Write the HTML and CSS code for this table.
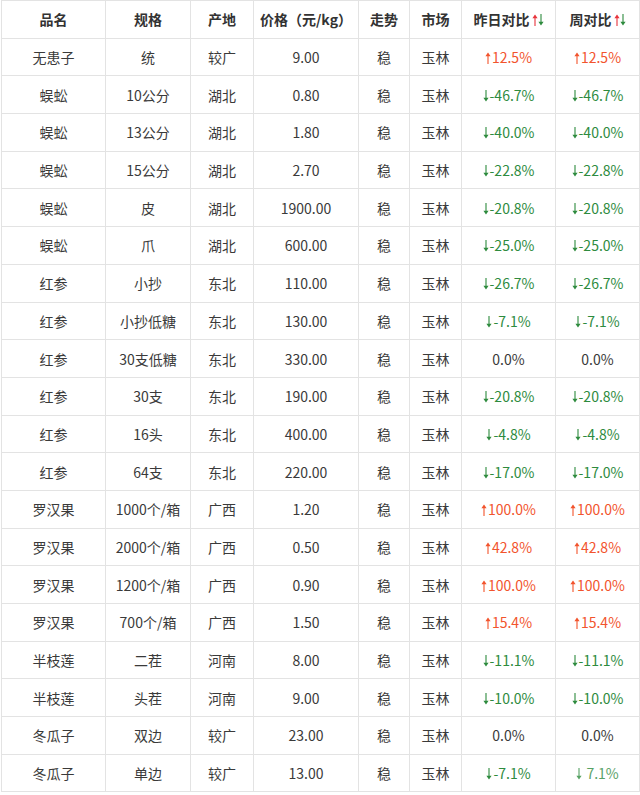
FILE: index.html
```html
<!DOCTYPE html>
<html lang="zh">
<head>
<meta charset="utf-8">
<link rel="stylesheet" href="styles.css">
</head>
<body>
<svg width="0" height="0" class="defs">
  <defs>
    <symbol id="au" viewBox="0 0 6 12"><path d="M3 0.5 L5.6 4.2 H3.55 V12 H2.45 V4.2 H0.4 Z" fill="currentColor"/></symbol>
    <symbol id="ad" viewBox="0 0 6 12"><path d="M3 11.5 L5.6 7.8 H3.55 V0 H2.45 V7.8 H0.4 Z" fill="currentColor"/></symbol>
  </defs>
</svg>
<table class="price-table">
<colgroup>
<col class="c1"><col class="c2"><col class="c3"><col class="c4"><col class="c5"><col class="c6"><col class="c7"><col class="c8">
</colgroup>
<thead>
<tr><th>品名</th><th>规格</th><th>产地</th><th>价格（元/kg）</th><th>走势</th><th>市场</th><th>昨日对比<svg class="arr hu"><use href="#au"/></svg><svg class="arr hd"><use href="#ad"/></svg></th><th>周对比<svg class="arr hu"><use href="#au"/></svg><svg class="arr hd"><use href="#ad"/></svg></th></tr>
</thead>
<tbody>
<tr><td>无患子</td><td>统</td><td>较广</td><td>9.00</td><td>稳</td><td>玉林</td><td class="up"><svg class="arr"><use href="#au"/></svg>12.5%</td><td class="up"><svg class="arr"><use href="#au"/></svg>12.5%</td></tr>
<tr><td>蜈蚣</td><td>10公分</td><td>湖北</td><td>0.80</td><td>稳</td><td>玉林</td><td class="down"><svg class="arr"><use href="#ad"/></svg>-46.7%</td><td class="down"><svg class="arr"><use href="#ad"/></svg>-46.7%</td></tr>
<tr><td>蜈蚣</td><td>13公分</td><td>湖北</td><td>1.80</td><td>稳</td><td>玉林</td><td class="down"><svg class="arr"><use href="#ad"/></svg>-40.0%</td><td class="down"><svg class="arr"><use href="#ad"/></svg>-40.0%</td></tr>
<tr><td>蜈蚣</td><td>15公分</td><td>湖北</td><td>2.70</td><td>稳</td><td>玉林</td><td class="down"><svg class="arr"><use href="#ad"/></svg>-22.8%</td><td class="down"><svg class="arr"><use href="#ad"/></svg>-22.8%</td></tr>
<tr><td>蜈蚣</td><td>皮</td><td>湖北</td><td>1900.00</td><td>稳</td><td>玉林</td><td class="down"><svg class="arr"><use href="#ad"/></svg>-20.8%</td><td class="down"><svg class="arr"><use href="#ad"/></svg>-20.8%</td></tr>
<tr><td>蜈蚣</td><td>爪</td><td>湖北</td><td>600.00</td><td>稳</td><td>玉林</td><td class="down"><svg class="arr"><use href="#ad"/></svg>-25.0%</td><td class="down"><svg class="arr"><use href="#ad"/></svg>-25.0%</td></tr>
<tr><td>红参</td><td>小抄</td><td>东北</td><td>110.00</td><td>稳</td><td>玉林</td><td class="down"><svg class="arr"><use href="#ad"/></svg>-26.7%</td><td class="down"><svg class="arr"><use href="#ad"/></svg>-26.7%</td></tr>
<tr><td>红参</td><td>小抄低糖</td><td>东北</td><td>130.00</td><td>稳</td><td>玉林</td><td class="down"><svg class="arr"><use href="#ad"/></svg>-7.1%</td><td class="down"><svg class="arr"><use href="#ad"/></svg>-7.1%</td></tr>
<tr><td>红参</td><td>30支低糖</td><td>东北</td><td>330.00</td><td>稳</td><td>玉林</td><td>0.0%</td><td>0.0%</td></tr>
<tr><td>红参</td><td>30支</td><td>东北</td><td>190.00</td><td>稳</td><td>玉林</td><td class="down"><svg class="arr"><use href="#ad"/></svg>-20.8%</td><td class="down"><svg class="arr"><use href="#ad"/></svg>-20.8%</td></tr>
<tr><td>红参</td><td>16头</td><td>东北</td><td>400.00</td><td>稳</td><td>玉林</td><td class="down"><svg class="arr"><use href="#ad"/></svg>-4.8%</td><td class="down"><svg class="arr"><use href="#ad"/></svg>-4.8%</td></tr>
<tr><td>红参</td><td>64支</td><td>东北</td><td>220.00</td><td>稳</td><td>玉林</td><td class="down"><svg class="arr"><use href="#ad"/></svg>-17.0%</td><td class="down"><svg class="arr"><use href="#ad"/></svg>-17.0%</td></tr>
<tr><td>罗汉果</td><td>1000个/箱</td><td>广西</td><td>1.20</td><td>稳</td><td>玉林</td><td class="up"><svg class="arr"><use href="#au"/></svg>100.0%</td><td class="up"><svg class="arr"><use href="#au"/></svg>100.0%</td></tr>
<tr><td>罗汉果</td><td>2000个/箱</td><td>广西</td><td>0.50</td><td>稳</td><td>玉林</td><td class="up"><svg class="arr"><use href="#au"/></svg>42.8%</td><td class="up"><svg class="arr"><use href="#au"/></svg>42.8%</td></tr>
<tr><td>罗汉果</td><td>1200个/箱</td><td>广西</td><td>0.90</td><td>稳</td><td>玉林</td><td class="up"><svg class="arr"><use href="#au"/></svg>100.0%</td><td class="up"><svg class="arr"><use href="#au"/></svg>100.0%</td></tr>
<tr><td>罗汉果</td><td>700个/箱</td><td>广西</td><td>1.50</td><td>稳</td><td>玉林</td><td class="up"><svg class="arr"><use href="#au"/></svg>15.4%</td><td class="up"><svg class="arr"><use href="#au"/></svg>15.4%</td></tr>
<tr><td>半枝莲</td><td>二茬</td><td>河南</td><td>8.00</td><td>稳</td><td>玉林</td><td class="down"><svg class="arr"><use href="#ad"/></svg>-11.1%</td><td class="down"><svg class="arr"><use href="#ad"/></svg>-11.1%</td></tr>
<tr><td>半枝莲</td><td>头茬</td><td>河南</td><td>9.00</td><td>稳</td><td>玉林</td><td class="down"><svg class="arr"><use href="#ad"/></svg>-10.0%</td><td class="down"><svg class="arr"><use href="#ad"/></svg>-10.0%</td></tr>
<tr><td>冬瓜子</td><td>双边</td><td>较广</td><td>23.00</td><td>稳</td><td>玉林</td><td>0.0%</td><td>0.0%</td></tr>
<tr><td>冬瓜子</td><td>单边</td><td>较广</td><td>13.00</td><td>稳</td><td>玉林</td><td class="down"><svg class="arr"><use href="#ad"/></svg>-7.1%</td><td class="down faded"><svg class="arr"><use href="#ad"/></svg> 7.1%</td></tr>
</tbody>
</table>
</body>
</html>
```
FILE: styles.css
```css
html, body {
  margin: 0;
  padding: 0;
  background: #fff;
}
body {
  padding: 0 0 0 1px;
  font-family: "Noto Sans CJK SC", "Noto Sans", "Liberation Sans", sans-serif;
  font-size: 14px;
  color: #3a3a3a;
}
.defs {
  position: absolute;
  width: 0;
  height: 0;
  overflow: hidden;
}
.price-table {
  border-collapse: collapse;
  table-layout: fixed;
  width: 638px;
}
.c1 { width: 104px; }
.c2 { width: 85px; }
.c3 { width: 63px; }
.c4 { width: 105px; }
.c5 { width: 51px; }
.c6 { width: 52px; }
.c7 { width: 94px; }
.c8 { width: 84px; }
.price-table th,
.price-table td {
  border: 1px solid #e3e3e3;
  text-align: center;
  vertical-align: middle;
  padding: 0;
  height: 36.7px;
  white-space: nowrap;
  line-height: 20px;
}
.price-table th {
  font-weight: bold;
  color: #333;
}
.arr {
  display: inline-block;
  width: 6px;
  height: 12px;
  vertical-align: -1px;
  margin-right: 1px;
}
.hu { color: #e8343c; margin-left: 2px; margin-right: 0; }
.hd { color: #2e8b3e; margin-right: 0; }
.up { color: #f2542d; }
.down { color: #2e8b3e; }
.faded { opacity: 0.8; }
```
